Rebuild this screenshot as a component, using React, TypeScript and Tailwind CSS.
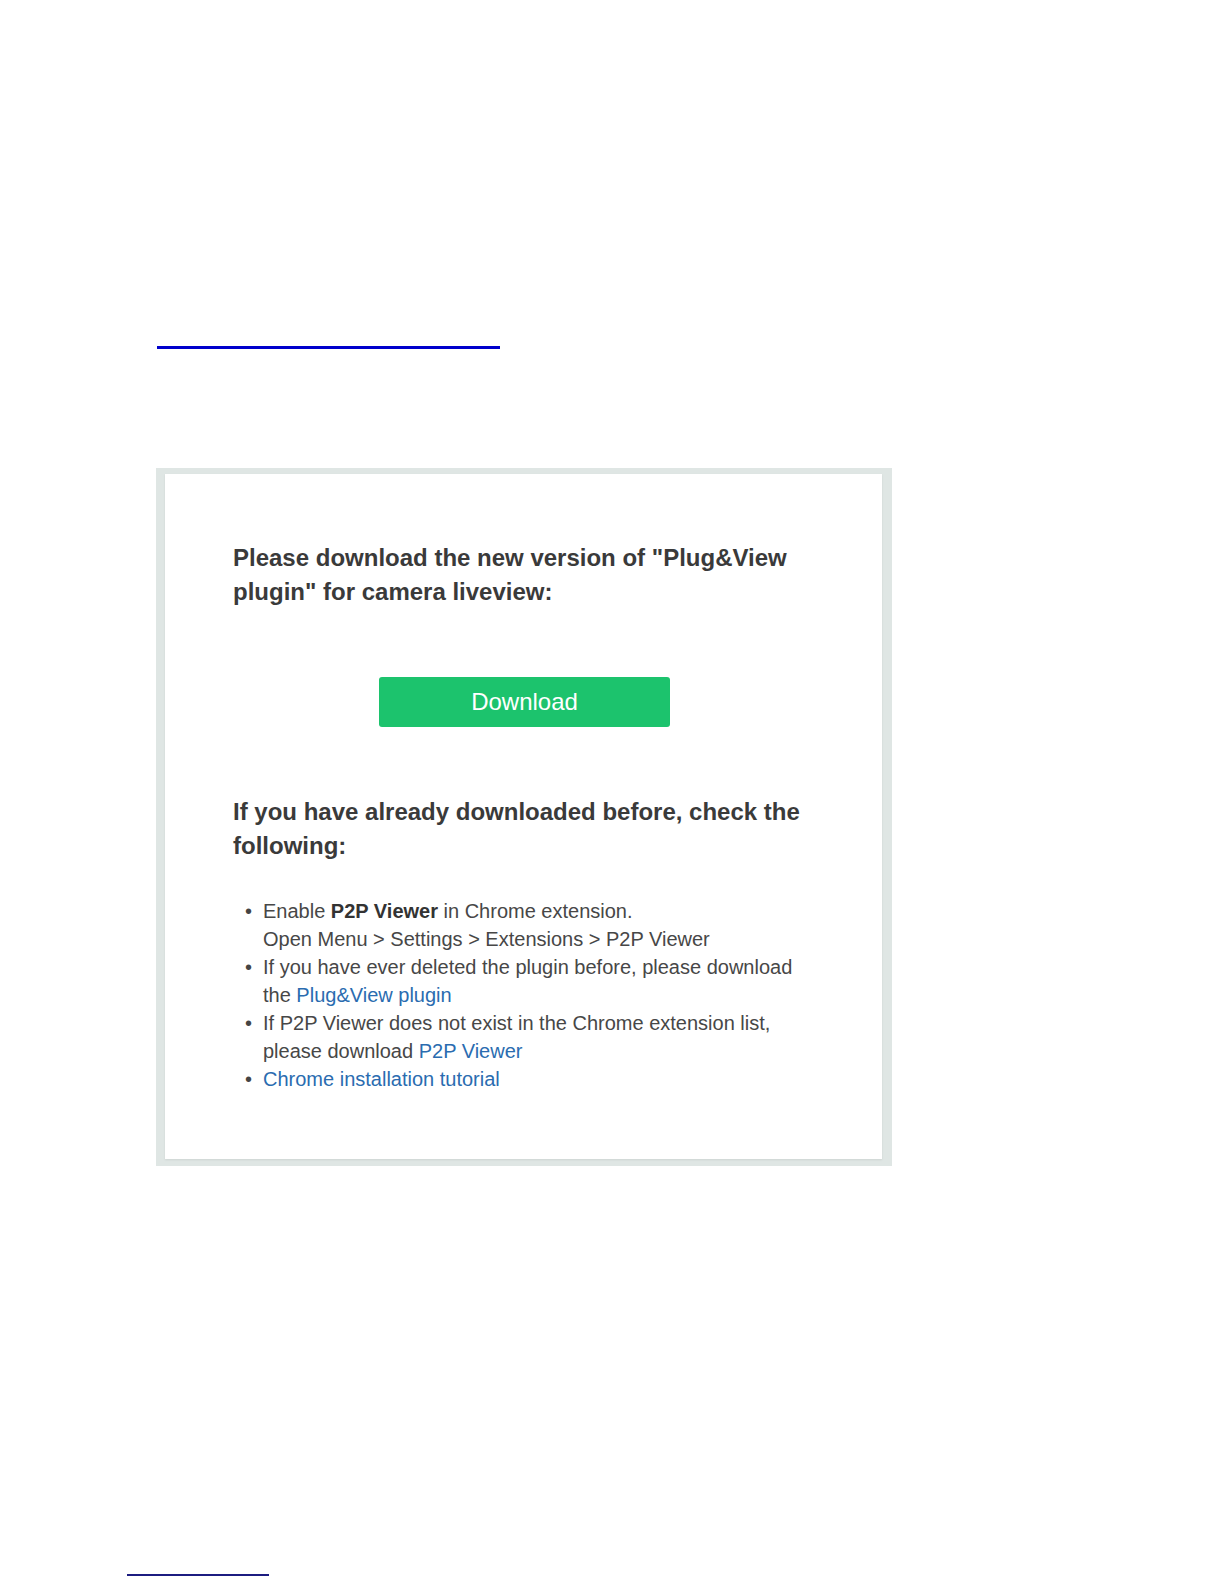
import React from 'react';

// Small reusable bullet row for the checklist
const Bullet: React.FC<{ children: React.ReactNode }> = ({ children }) => (
  <li className="flex">
    <span className="w-[18px] shrink-0 text-[#444]">•</span>
    <span className="whitespace-nowrap">{children}</span>
  </li>
);

const Link: React.FC<{ children: React.ReactNode }> = ({ children }) => (
  <a href="#" className="text-[#2a6cb0]">{children}</a>
);

const App: React.FC = () => {
  return (
    <div className="w-[1224px] h-[1584px] bg-white flex flex-col font-['Liberation_Sans',Arial,sans-serif]">
      {/* top link underline */}
      <div className="pt-[346px] pl-[157px]">
        <div className="w-[343px] h-[3px] bg-[#0000cc]" />
      </div>

      {/* plugin notice panel */}
      <div className="ml-[156px] mt-[119px] w-[736px] h-[698px] bg-[#dfe6e4] pl-[9px] pr-[10px] pt-[6px] pb-[7px]">
        <div className="h-full bg-white shadow-[0_1px_2px_rgba(0,0,0,0.08)] pl-[68px] pt-[67px]">
          <h2 className="text-[24px] leading-[34px] font-bold text-[#3a3a3a] whitespace-nowrap">
            Please download the new version of "Plug&amp;View
            <br />
            plugin" for camera liveview:
          </h2>

          <div className="mt-[68px] ml-[146px]">
            <button className="w-[291px] h-[50px] rounded-[3px] bg-[#1cc36d] text-white text-[24px] leading-none">
              Download
            </button>
          </div>

          <h2 className="mt-[68px] text-[24px] leading-[34px] font-bold text-[#3a3a3a] whitespace-nowrap">
            If you have already downloaded before, check the
            <br />
            following:
          </h2>

          <ul className="mt-[34px] ml-[12px] text-[20px] leading-[28px] text-[#474747]">
            <Bullet>
              Enable <b className="font-bold text-[#333]">P2P Viewer</b> in Chrome extension.
              <br />
              Open Menu &gt; Settings &gt; Extensions &gt; P2P Viewer
            </Bullet>
            <Bullet>
              If you have ever deleted the plugin before, please download
              <br />
              the <Link>Plug&amp;View plugin</Link>
            </Bullet>
            <Bullet>
              If P2P Viewer does not exist in the Chrome extension list,
              <br />
              please download <Link>P2P Viewer</Link>
            </Bullet>
            <Bullet>
              <Link>Chrome installation tutorial</Link>
            </Bullet>
          </ul>
        </div>
      </div>

      {/* footer rule */}
      <div className="mt-[408px] ml-[127px] w-[142px] h-[2px] bg-[#1c1c80]" />
    </div>
  );
};

export default App;
